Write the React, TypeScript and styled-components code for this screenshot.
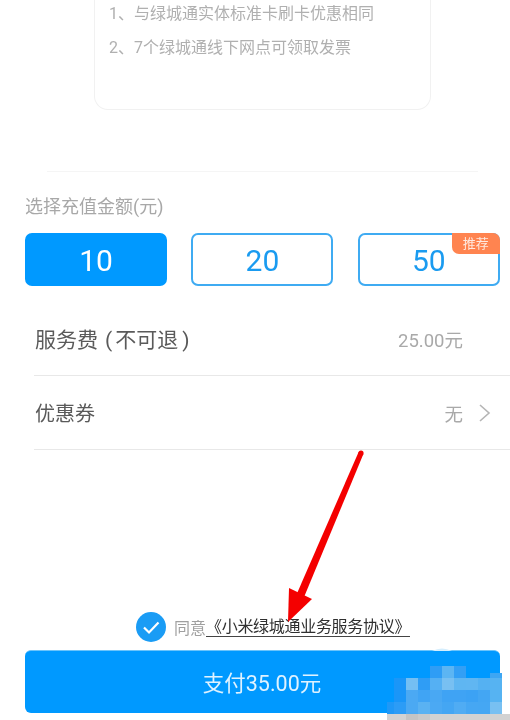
import React from "react";
import styled, { createGlobalStyle } from "styled-components";

const Global = createGlobalStyle`
  html, body { margin: 0; padding: 0; background: #fff; }
  body { font-family: "Roboto", "Noto Sans CJK SC", sans-serif; }
`;
const Page = styled.div`
  position: relative; width: 510px; height: 720px; overflow: hidden; background: #fff;
  display: flex; flex-direction: column; filter: blur(0.45px);
`;
const Card = styled.div`
  box-sizing: border-box; width: 337px; height: 110px; margin-left: 94px;
  border: 1px solid #f1f1f1; border-top: none; border-radius: 0 0 14px 14px;
  padding: 2px 0 0 14px; display: flex; flex-direction: column; gap: 10px;
`;
const Note = styled.div`
  font-size: 16px; line-height: 24px; color: #b0b0b0; white-space: nowrap;
`;
const TopRule = styled.div`
  height: 1px; margin: 61px 32px 0 47px; background: #f5f5f5;
`;
const Label = styled.div`
  margin: 24px 0 0 25px; font-size: 18px; line-height: 22px; color: #a8a8a8;
`;
const Amounts = styled.div`
  display: grid; grid-template-columns: 142px 142px 142px; column-gap: 24.4px;
  margin: 15px 0 0 25px;
`;
const Amount = styled.div<{ $on?: boolean }>`
  position: relative; box-sizing: border-box; height: 53px; border-radius: 7px; padding-top: 2px;
  display: flex; align-items: center; justify-content: center;
  font-size: 30px; color: ${p => (p.$on ? "#fff" : "#1a9bf0")};
  background: ${p => (p.$on ? "#0099ff" : "#fff")};
  border: 2px solid ${p => (p.$on ? "#0099ff" : "#3fabf2")};
`;
const Badge = styled.div`
  position: absolute; top: -2px; right: -2px; width: 48px; height: 21px;
  border-radius: 0 7px 0 7px; background: #ff8450; color: #ffe9df;
  font-size: 13px; line-height: 21px; text-align: center;
`;
const Row = styled.div<{ $gap: number }>`
  box-sizing: border-box; height: 74px; margin: ${p => p.$gap}px 0 0 34px; padding: 0 47px 0 1px;
  border-bottom: 1px solid #e8e8e8; display: flex; align-items: center; justify-content: space-between;
`;
const RowTitle = styled.div<{ $size: number; $lift: number }>`
  font-size: ${p => p.$size}px; color: #5a5a5a; white-space: nowrap; padding-bottom: ${p => p.$lift}px;
`;
const Paren = styled.span`
  margin: 0 3px 0 7px;
`;
const ParenEnd = styled.span`
  margin-left: 4px;
`;
const RowValue = styled.div`
  display: flex; align-items: center; font-size: 18.5px; color: #a9a9a9;
`;
const Chevron = styled.svg`
  width: 14px; height: 20px; margin: 0 -29px 0 15px;
`;
const Agree = styled.div`
  display: flex; align-items: center; margin: 162px 0 0 136px; height: 30px;
`;
const Check = styled.svg`
  width: 30px; height: 30px; margin-right: 8px; flex: none;
`;
const AgreeText = styled.span`
  font-size: 16px; color: #a0a0a0; white-space: nowrap;
`;
const Link = styled.span`
  font-size: 16px; color: #2f2f2f; border-bottom: 1.5px solid #444; line-height: 19px;
  letter-spacing: -0.3px; white-space: nowrap;
`;
const Pay = styled.div`
  box-sizing: border-box; width: 475px; height: 63px; margin: 8px 0 0 25px; border-radius: 6px;
  background: #0099ff; border-top: 1px solid #6cc4fb; color: #dff2ff; font-size: 21.5px;
  display: flex; align-items: center; justify-content: center; padding: 0 1px 2px 0;
`;
const Overlay = styled.svg`
  position: absolute; left: 0; top: 0; width: 510px; height: 720px; pointer-events: none;
`;

const S = 12;
const mosaic: [number, number, string][] = [
  [430, 666, "#2f9df5"], [442, 666, "#5cb5f3"], [454, 666, "#339ff5"],
  [490, 673, "#3da6f3"],
  [394, 678, "#1a96f8"], [406, 678, "#74bff3"], [418, 678, "#2f9df5"], [430, 678, "#55b0f3"], [442, 678, "#78c0f2"],
  [454, 678, "#5fb6f2"], [466, 678, "#60b6f2"], [478, 678, "#55b1f2"], [490, 678, "#56b3f2"],
  [394, 690, "#1a96f8"], [406, 690, "#4ba9f3"], [418, 690, "#40a4f4"], [430, 690, "#49a8f3"], [442, 690, "#3fa3f4"],
  [454, 690, "#3fa3f4"], [466, 690, "#3ca2f4"], [478, 690, "#43a6f3"], [490, 690, "#56b3f2"],
  [387, 702, "#1f98f7"], [394, 702, "#2c9cf6"], [406, 702, "#4ba9f3"], [418, 702, "#5ab2f2"], [430, 702, "#4ba9f3"], [442, 702, "#44a6f3"],
  [454, 702, "#50acf3"], [466, 702, "#46a7f3"], [478, 702, "#45a7f3"], [490, 702, "#78c0f2"],
];

export default function App() {
  return (
    <Page>
      <Global />
      <Card>
        <Note>1、与绿城通实体标准卡刷卡优惠相同</Note>
        <Note>2、7个绿城通线下网点可领取发票</Note>
      </Card>
      <TopRule />
      <Label>选择充值金额(元)</Label>
      <Amounts>
        <Amount $on>10</Amount>
        <Amount>20</Amount>
        <Amount>50<Badge>推荐</Badge></Amount>
      </Amounts>
      <Row $gap={16}>
        <RowTitle $size={21} $lift={2}>服务费<Paren>(</Paren>不可退<ParenEnd>)</ParenEnd></RowTitle>
        <RowValue>25.00元</RowValue>
      </Row>
      <Row $gap={0}>
        <RowTitle $size={20} $lift={0}>优惠券</RowTitle>
        <RowValue>
          无
          <Chevron viewBox="0 0 14 20" fill="none" stroke="#b5b5b5" strokeWidth="1.6">
            <path d="M2 2l9 8-9 8" />
          </Chevron>
        </RowValue>
      </Row>
      <Agree>
        <Check viewBox="0 0 30 30">
          <circle cx="15" cy="15" r="15" fill="#1a9cf5" />
          <path d="M8 15.5l5 5 9.5-10" fill="none" stroke="#fff" strokeWidth="2.2" />
        </Check>
        <AgreeText>同意</AgreeText>
        <Link>《小米绿城通业务服务协议》</Link>
      </Agree>
      <Pay>支付35.00元</Pay>
      <Overlay viewBox="0 0 510 720">
        <path d="M432 651q10-5 20 0z" fill="#d5eefd" />
        {mosaic.map(([x, y, c]) => (
          <rect key={`${x}-${y}`} x={x} y={y} width={S} height={S} fill={c} />
        ))}
        <path d="M387 714h123v6H387z" fill="#d2d2d2" />
        <path d="M406 714h12v6h-12z" fill="#c4c4c4" />
        <path d="M418 714h12v6h-12z" fill="#cacaca" />
        <circle cx="361" cy="453" r="2.6" fill="#f40000" />
        <path d="M358.6 452L363.4 454L302 602L295 598z" fill="#f40000" />
        <path d="M288 622L289 588 312 599z" fill="#f40000" />
      </Overlay>
    </Page>
  );
}
